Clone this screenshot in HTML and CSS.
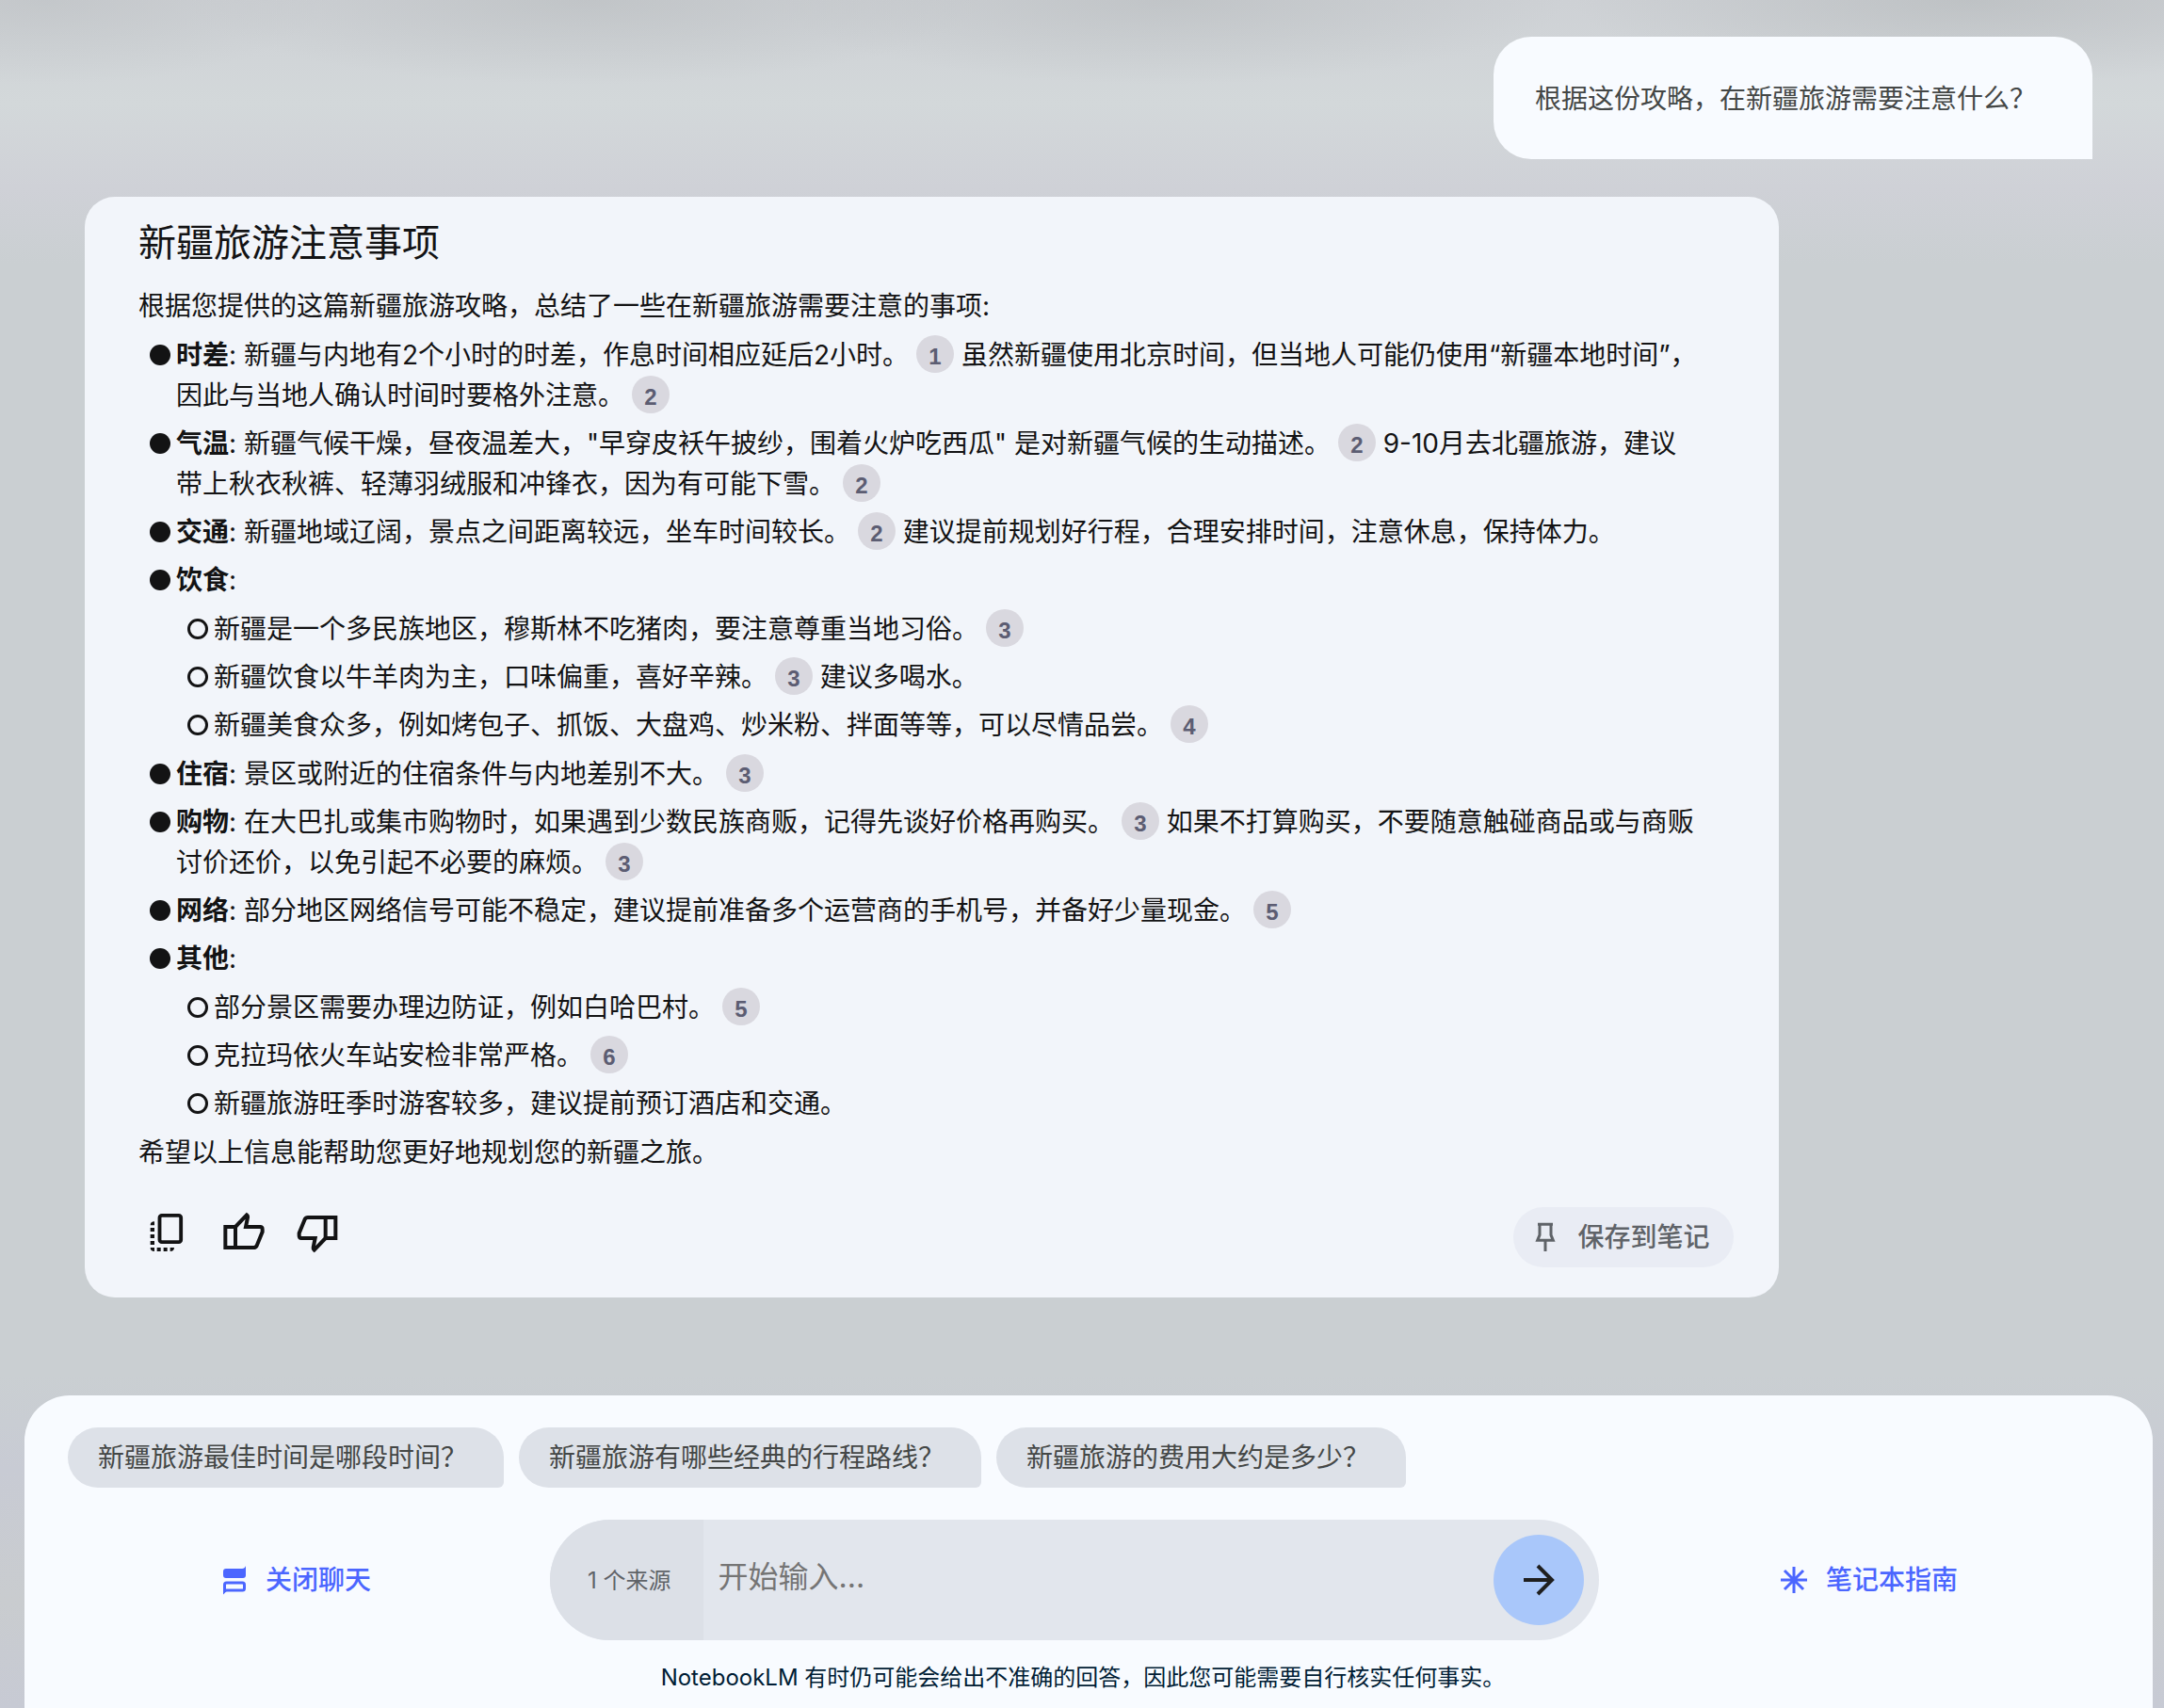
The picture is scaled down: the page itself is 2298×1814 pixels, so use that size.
FILE: index.html
```html
<!DOCTYPE html>
<html lang="zh-CN">
<head>
<meta charset="utf-8">
<meta name="viewport" content="width=device-width, initial-scale=1">
<title>NotebookLM</title>
<link rel="stylesheet" href="styles.css">
</head>
<body>
<main class="chat">
  <p class="question">根据这份攻略，在新疆旅游需要注意什么？</p>

  <article class="answer">
    <div class="prose">
      <h1 class="answer-title">新疆旅游注意事项</h1>
      <p>根据您提供的这篇新疆旅游攻略，总结了一些在新疆旅游需要注意的事项:</p>
      <ul class="list">
        <li><strong>时差</strong>: 新疆与内地有2个小时的时差，作息时间相应延后2小时。 <button class="cite">1</button> 虽然新疆使用北京时间，但当地人可能仍使用“新疆本地时间”，因此与当地人确认时间时要格外注意。 <button class="cite">2</button></li>
        <li><strong>气温</strong>: 新疆气候干燥，昼夜温差大，"早穿皮袄午披纱，围着火炉吃西瓜" 是对新疆气候的生动描述。 <button class="cite">2</button> 9-10月去北疆旅游，建议带上秋衣秋裤、轻薄羽绒服和冲锋衣，因为有可能下雪。 <button class="cite">2</button></li>
        <li><strong>交通</strong>: 新疆地域辽阔，景点之间距离较远，坐车时间较长。 <button class="cite">2</button> 建议提前规划好行程，合理安排时间，注意休息，保持体力。</li>
        <li><strong>饮食</strong>:
          <ul class="list sublist">
            <li>新疆是一个多民族地区，穆斯林不吃猪肉，要注意尊重当地习俗。 <button class="cite">3</button></li>
            <li>新疆饮食以牛羊肉为主，口味偏重，喜好辛辣。 <button class="cite">3</button> 建议多喝水。</li>
            <li>新疆美食众多，例如烤包子、抓饭、大盘鸡、炒米粉、拌面等等，可以尽情品尝。 <button class="cite">4</button></li>
          </ul>
        </li>
        <li><strong>住宿</strong>: 景区或附近的住宿条件与内地差别不大。 <button class="cite">3</button></li>
        <li><strong>购物</strong>: 在大巴扎或集市购物时，如果遇到少数民族商贩，记得先谈好价格再购买。 <button class="cite">3</button> 如果不打算购买，不要随意触碰商品或与商贩讨价还价，以免引起不必要的麻烦。 <button class="cite">3</button></li>
        <li><strong>网络</strong>: 部分地区网络信号可能不稳定，建议提前准备多个运营商的手机号，并备好少量现金。 <button class="cite">5</button></li>
        <li><strong>其他</strong>:
          <ul class="list sublist">
            <li>部分景区需要办理边防证，例如白哈巴村。 <button class="cite">5</button></li>
            <li>克拉玛依火车站安检非常严格。 <button class="cite">6</button></li>
            <li>新疆旅游旺季时游客较多，建议提前预订酒店和交通。</li>
          </ul>
        </li>
      </ul>
      <p class="closing">希望以上信息能帮助您更好地规划您的新疆之旅。</p>
    </div>

    <div class="actions">
      <div class="feedback">
        <button class="icon-button" aria-label="复制">
          <svg width="48" height="64" viewBox="50 96 144 192" aria-hidden="true">
            <rect x="87.500" y="122.500" width="68" height="85" rx="7" fill="none" stroke="currentColor" stroke-width="11.500"/>
            <path fill="currentColor" d="M71 142v12H58q0-12 13-12zM58 162h13v12H58zM58 183h13v12H58zM58 204h13v12H58zM58 225h13v12q-13 0-13-12zM79 225h12v12H79zM100 225h12v12h-12zM121 225h13q0 12-13 12z"/>
          </svg>
        </button>
        <button class="icon-button" aria-label="赞">
          <svg width="48" height="64" viewBox="284 96 144 192" fill="none" stroke="currentColor" stroke-width="12" aria-hidden="true">
            <path d="M297 159h32v66h-32zM329 159l36-38q4 3 3 8l-6 30h46q7 0 7 8v8l-18 44q-3 6-10 6h-58"/>
          </svg>
        </button>
        <button class="icon-button" aria-label="踩">
          <svg width="48" height="64" viewBox="518 96 144 192" fill="none" stroke="currentColor" stroke-width="12" aria-hidden="true">
            <path d="M648 195h-32v-66h32zM616 195l-36 38q-4-3-3-8l6-30h-44q-7 0-7-8v-8l18-44q3-6 10-6h56"/>
          </svg>
        </button>
      </div>
      <button class="save">
        <svg width="28" height="34" viewBox="144 144 84 102" fill="none" stroke="currentColor" aria-hidden="true">
          <path stroke-width="9" d="M162 154h48M168 154v34l-7 17h50l-7-17v-34"/>
          <path stroke-width="9" d="M186 205v35"/>
        </svg>
        保存到笔记
      </button>
    </div>
  </article>
</main>

<footer class="composer">
  <div class="chips">
    <button class="chip">新疆旅游最佳时间是哪段时间？</button>
    <button class="chip">新疆旅游有哪些经典的行程路线？</button>
    <button class="chip">新疆旅游的费用大约是多少？</button>
  </div>
  <div class="controls">
    <button class="side-action">
      <svg width="26" height="32" viewBox="0 0 26 32" aria-hidden="true">
        <path fill="currentColor" d="M25 1v10q0 3-3 3H4q-3 0-3-3V7q0-3 3-3h17q3 0 4-3z"/>
        <path fill="none" stroke="currentColor" stroke-width="3" d="M2.500 28v-7q0-2 2-2h17q2 0 2 2v4q0 2-2 2h-17q-1 0-2 1z"/>
        <path fill="currentColor" d="M1 24v7q1-3 4-3z"/>
      </svg>
      关闭聊天
    </button>
    <form class="ask">
      <span class="sources">1 个来源</span>
      <input class="ask-input" type="text" placeholder="开始输入..." aria-label="开始输入">
      <button class="send" type="button" aria-label="发送">
        <svg width="36" height="36" viewBox="0 0 36 36" fill="none" stroke="currentColor" stroke-width="4" aria-hidden="true">
          <path d="M2 18h30M17 3l15 15-15 15"/>
        </svg>
      </button>
    </form>
    <button class="side-action">
      <svg width="28" height="28" viewBox="0 0 28 28" fill="none" stroke="currentColor" stroke-width="3" aria-hidden="true">
        <path d="M14 0v28M0 14h28M4 4l20 20M24 4L4 24"/>
      </svg>
      笔记本指南
    </button>
  </div>
  <p class="disclaimer">NotebookLM 有时仍可能会给出不准确的回答，因此您可能需要自行核实任何事实。</p>
</footer>
</body>
</html>
```

FILE: styles.css
```css
*,
*::before {
  box-sizing: border-box;
}

body {
  margin: 0;
  min-height: 100vh;
  display: flex;
  flex-direction: column;
  font-family: Inter, "Noto Sans CJK SC", sans-serif;
  font-size: 28px;
  line-height: 43px;
  color: #131314;
  background:
    radial-gradient(ellipse 420px 90px at 27% 0, rgba(180, 184, 186, 0.5), transparent),
    radial-gradient(ellipse 420px 90px at 54% 0, rgba(180, 184, 186, 0.5), transparent),
    radial-gradient(ellipse 420px 90px at 91% 0, rgba(180, 184, 186, 0.6), transparent),
    radial-gradient(ellipse 300px 90px at 2% 0, rgba(180, 184, 186, 0.4), transparent),
    linear-gradient(#ced1d5 0, #d3d8da 110px, #cfd1d7 200px, #cacfd2 280px, #cacfd2 1460px, #c8cbd4 1560px, #c9cccf 1700px, #c7cad4 100%);
}

button,
input {
  font: inherit;
  color: inherit;
  border: 0;
  background: none;
  padding: 0;
}

p,
ul,
h1 {
  margin: 0;
  padding: 0;
}

svg {
  display: block;
  flex: none;
}

.chat {
  flex: 1;
  display: flex;
  flex-direction: column;
  gap: 40px;
  padding: 39px 76px 104px 90px;
}

.question {
  align-self: flex-end;
  padding: 45px 60px 42px 44px;
  border-radius: 40px 40px 0 40px;
  background: #f8fbff;
  color: #444746;
}

.answer {
  width: 84.4%;
  padding: 21px 48px 32px 57px;
  border-radius: 32px;
  background: #f2f5fa;
}

.prose {
  padding-right: 34px;
}

.answer-title {
  margin-bottom: 18px;
  font-size: 40px;
  line-height: 56px;
  font-weight: 400;
}

.list {
  list-style: none;
  margin-top: 9px;
  padding-left: 40px;
}

.list > li + li {
  margin-top: 8px;
}

.list > li::before {
  content: "";
  display: inline-block;
  width: 22px;
  height: 22px;
  margin: 0 6px 0 -28px;
  border-radius: 50%;
  background: currentColor;
  vertical-align: -1px;
}

.sublist {
  padding-bottom: 1px;
}

.sublist > li::before {
  border: 3px solid currentColor;
  background: none;
}

.closing {
  margin-top: 8px;
}

.cite {
  display: inline-block;
  width: 40px;
  height: 40px;
  margin: -6px 0;
  padding-top: 6px;
  border-radius: 50%;
  background: #d9d8df;
  color: #5c5d72;
  font: 700 24px/34px "Liberation Sans", sans-serif;
  text-align: center;
  vertical-align: baseline;
}

.actions {
  display: flex;
  justify-content: space-between;
  margin-top: 36px;
}

.feedback {
  display: flex;
  gap: 30px;
  padding-left: 10px;
}

.save {
  display: flex;
  align-items: center;
  gap: 20px;
  height: 64px;
  padding: 0 26px 0 20px;
  border-radius: 32px;
  background: #e9ecf4;
  color: #5f6368;
  font-weight: 500;
}

.composer {
  margin: 0 12px 0 26px;
  padding: 34px 58px 16px 46px;
  border-radius: 48px 48px 0 0;
  background: #f8fbff;
}

.chips {
  display: flex;
  gap: 16px;
}

.chip {
  height: 64px;
  padding: 0 39px 0 32px;
  border-radius: 32px 32px 6px 32px;
  background: #dde1e8;
  color: #444746;
}

.controls {
  display: grid;
  grid-template-columns: 486fr 1184fr 486fr;
  align-items: center;
  margin-top: 34px;
}

.side-action {
  display: flex;
  align-items: center;
  justify-self: center;
  gap: 20px;
  color: #4b66ff;
  font-weight: 500;
}

.ask {
  display: flex;
  align-items: center;
  height: 128px;
  margin: 0 44px 0 26px;
  padding-right: 16px;
  border-radius: 64px;
  background: #e2e6ed;
  overflow: hidden;
}

.sources {
  display: flex;
  align-items: center;
  align-self: stretch;
  padding: 0 34px 0 40px;
  background: #dce0e7;
  color: #5f6368;
  font-size: 24px;
}

.ask-input {
  flex: 1;
  min-width: 0;
  height: 64px;
  padding: 0 16px 8px;
  font-size: 32px;
  outline: none;
}

.ask-input::placeholder {
  color: #757575;
  opacity: 1;
}

.send {
  display: grid;
  place-items: center;
  width: 96px;
  height: 96px;
  border-radius: 50%;
  background: #a9c7fa;
  color: #1f1f1f;
}

.disclaimer {
  margin-top: 24px;
  color: #001d35;
  font-size: 24px;
  line-height: 32px;
  text-align: center;
}
```
